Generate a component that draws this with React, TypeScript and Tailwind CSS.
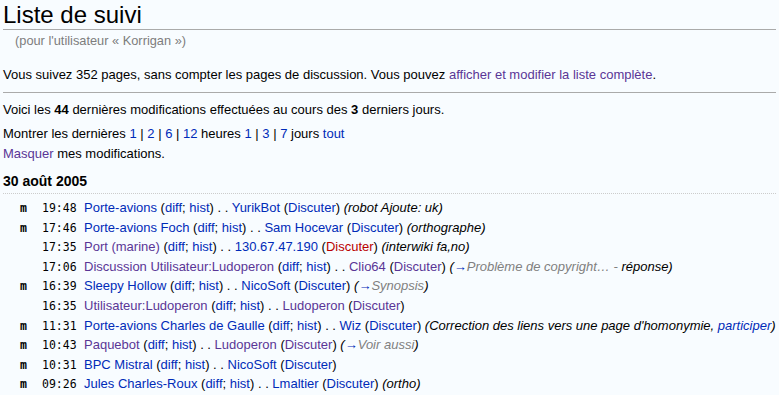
const blue = "text-[#002bb8]";
const visited = "text-[#5a3696]";
const red = "text-[#ba0000]";

type Part = { t: string; c?: string; i?: boolean; g?: boolean };

type Row = { minor: boolean; time: string; parts: Part[] };

const L = (t: string, c = blue): Part => ({ t, c });
const T = (t: string): Part => ({ t });

const dh = (v = false): Part[] => [
  T(" ("),
  L("diff", v ? visited : blue),
  T("; "),
  L("hist", blue),
  T(") . . "),
];

const rows: Row[] = [
  {
    minor: true,
    time: "19:48",
    parts: [L("Porte-avions"), ...dh(), L("YurikBot"), T(" ("), L("Discuter"), T(") "), { t: "(robot Ajoute: uk)", i: true }],
  },
  {
    minor: true,
    time: "17:46",
    parts: [L("Porte-avions Foch"), ...dh(), L("Sam Hocevar"), T(" ("), L("Discuter"), T(") "), { t: "(orthographe)", i: true }],
  },
  {
    minor: false,
    time: "17:35",
    parts: [L("Port (marine)", visited), ...dh(), L("130.67.47.190"), T(" ("), L("Discuter", red), T(") "), { t: "(interwiki fa,no)", i: true }],
  },
  {
    minor: false,
    time: "17:06",
    parts: [
      L("Discussion Utilisateur:Ludoperon", visited),
      ...dh(),
      L("Clio64", visited),
      T(" ("),
      L("Discuter", visited),
      T(") "),
      { t: "(", i: true },
      { t: "→", c: blue },
      { t: "Problème de copyright… - ", i: true, g: true },
      { t: "réponse)", i: true },
    ],
  },
  {
    minor: true,
    time: "16:39",
    parts: [
      L("Sleepy Hollow"),
      ...dh(),
      L("NicoSoft"),
      T(" ("),
      L("Discuter"),
      T(") "),
      { t: "(", i: true },
      { t: "→", c: blue },
      { t: "Synopsis", i: true, g: true },
      { t: ")", i: true },
    ],
  },
  {
    minor: false,
    time: "16:35",
    parts: [L("Utilisateur:Ludoperon", visited), ...dh(), L("Ludoperon", visited), T(" ("), L("Discuter", visited), T(")")],
  },
  {
    minor: true,
    time: "11:31",
    parts: [
      L("Porte-avions Charles de Gaulle"),
      ...dh(),
      L("Wiz"),
      T(" ("),
      L("Discuter"),
      T(") "),
      { t: "(Correction des liens vers une page d'homonymie, ", i: true },
      { t: "participer", c: blue, i: true },
      { t: ")", i: true },
    ],
  },
  {
    minor: true,
    time: "10:43",
    parts: [
      L("Paquebot", visited),
      ...dh(),
      L("Ludoperon", visited),
      T(" ("),
      L("Discuter", visited),
      T(") "),
      { t: "(", i: true },
      { t: "→", c: blue },
      { t: "Voir aussi", i: true, g: true },
      { t: ")", i: true },
    ],
  },
  {
    minor: true,
    time: "10:31",
    parts: [L("BPC Mistral"), ...dh(), L("NicoSoft"), T(" ("), L("Discuter"), T(")")],
  },
  {
    minor: true,
    time: "09:26",
    parts: [L("Jules Charles-Roux"), ...dh(), L("Lmaltier"), T(" ("), L("Discuter"), T(") "), { t: "(ortho)", i: true }],
  },
];

export default function App() {
  return (
    <div className="w-[779px] h-[395px] overflow-hidden bg-[#f8fcff] text-black text-[13px] leading-[20px] font-['Liberation_Sans',Arial,sans-serif]">
      <div className="px-[3px]">
        <h1 className="text-[24px] leading-[28px] pt-[1px] border-b border-[#aaa]">Liste de suivi</h1>
        <div className="pl-[12px] pt-[2px] text-[12.8px] leading-[18px] text-[#7d7d7d]">
          (pour l'utilisateur « Korrigan »)
        </div>
        <p className="mt-[15px] pb-[7px] border-b border-[#aaa]">
          Vous suivez 352 pages, sans compter les pages de discussion. Vous pouvez{" "}
          <span className={visited}>afficher et modifier la liste complète</span>.
        </p>
        <p className="mt-[7px]">
          Voici les <b>44</b> dernières modifications effectuées au cours des <b>3</b> derniers jours.
        </p>
        <p className="mt-[4px]">
          Montrer les dernières <span className={blue}>1</span> | <span className={blue}>2</span> |{" "}
          <span className={blue}>6</span> | <span className={blue}>12</span> heures <span className={blue}>1</span> |{" "}
          <span className={blue}>3</span> | <span className={blue}>7</span> jours <span className={blue}>tout</span>
        </p>
        <p>
          <span className={visited}>Masquer</span> mes modifications.
        </p>
        <h4 className="mt-[7px] text-[14px] font-bold leading-[20px] pb-[2px] border-b border-dotted border-[#ccc]">
          30 août 2005
        </h4>
        <ul className="mt-[4px]">
          {rows.map((r, idx) => (
            <li key={idx} className="flex items-baseline h-[19.6px] leading-[19.6px] whitespace-nowrap">
              <span className="w-[39px] pl-[17px] font-['DejaVu_Sans_Mono',monospace] font-bold text-[11.5px]">
                {r.minor ? "m" : ""}
              </span>
              <span className="w-[42px] font-['DejaVu_Sans_Mono',monospace] text-[11.5px]">{r.time}</span>
              <span>
                {r.parts.map((p, j) => (
                  <span key={j} className={`${p.c ?? ""} ${p.i ? "italic" : ""} ${p.g ? "text-[#808080]" : ""}`}>
                    {p.t}
                  </span>
                ))}
              </span>
            </li>
          ))}
        </ul>
      </div>
    </div>
  );
}
